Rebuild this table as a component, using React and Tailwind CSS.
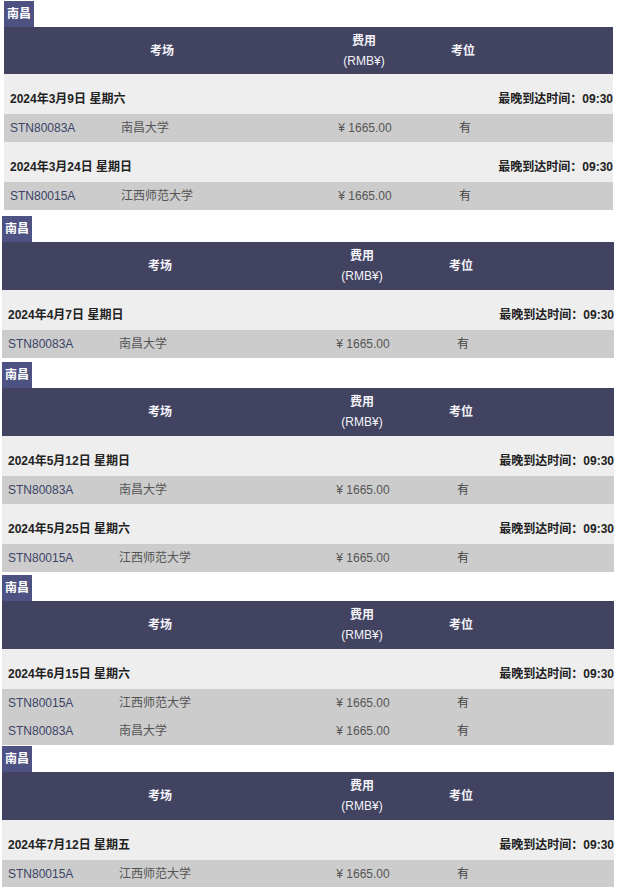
const sections = [
  {
    mt: "mt-[1px]",
    first: true,
    days: [
      { date: "2024年3月9日 星期六", rows: [["STN80083A", "南昌大学"]] },
      { date: "2024年3月24日 星期日", rows: [["STN80015A", "江西师范大学"]] },
    ],
  },
  {
    mt: "mt-[6px]",
    days: [{ date: "2024年4月7日 星期日", rows: [["STN80083A", "南昌大学"]] }],
  },
  {
    mt: "mt-[4px]",
    days: [
      { date: "2024年5月12日 星期日", rows: [["STN80083A", "南昌大学"]] },
      { date: "2024年5月25日 星期六", rows: [["STN80015A", "江西师范大学"]] },
    ],
  },
  {
    mt: "mt-[3px]",
    days: [
      {
        date: "2024年6月15日 星期六",
        rows: [
          ["STN80015A", "江西师范大学"],
          ["STN80083A", "南昌大学"],
        ],
      },
    ],
  },
  {
    mt: "mt-[1px]",
    days: [{ date: "2024年7月12日 星期五", rows: [["STN80015A", "江西师范大学"]] }],
  },
];

function Section({ s }) {
  return (
    <div className={`${s.mt} ${s.first ? "ml-[4px] w-[609px]" : "ml-[2px] w-[612px]"}`}>
      <div className="flex">
        <span className="h-[26px] px-[3px] flex items-center bg-[#4d5282] text-white font-bold text-[12px]">
          南昌
        </span>
      </div>
      <div
        className={`${s.first ? "h-[47px]" : "h-[48px]"} flex items-center bg-[#414360] text-[#f4f4fa] text-[12px]`}
      >
        <div className="w-[316px] text-center font-bold">考场</div>
        <div className="w-[88px] text-center leading-[20px]">
          <div className="font-bold">费用</div>
          <div>(RMB¥)</div>
        </div>
        <div className="w-[110px] text-center font-bold">考位</div>
        <div className="flex-1" />
      </div>
      {s.days.map((d, i) => (
        <div key={i}>
          <div className="h-[40px] flex items-end justify-between pb-[6px] pl-[6px] bg-[#eeeeee] text-[12px] font-bold text-[#222]">
            <span>{d.date}</span>
            <span>最晚到达时间：09:30</span>
          </div>
          {d.rows.map((r, j) => (
            <div key={j} className="h-[28px] flex items-center bg-[#cccccc] text-[12px]">
              <div className="w-[111px] pl-[6px] text-[#3b4468]">{r[0]}</div>
              <div className="w-[205px] pl-[6px] text-[#555]">{r[1]}</div>
              <div className="w-[90px] text-center text-[#555]">¥ 1665.00</div>
              <div className="w-[110px] text-center text-[#444]">有</div>
              <div className="flex-1" />
            </div>
          ))}
        </div>
      ))}
    </div>
  );
}

export default function App() {
  return (
    <div
      className="w-[617px] h-[887px] overflow-hidden bg-white"
      style={{ fontFamily: '"Liberation Sans", Arial, "Noto Sans CJK SC", sans-serif' }}
    >
      {sections.map((s, i) => (
        <Section key={i} s={s} />
      ))}
    </div>
  );
}
